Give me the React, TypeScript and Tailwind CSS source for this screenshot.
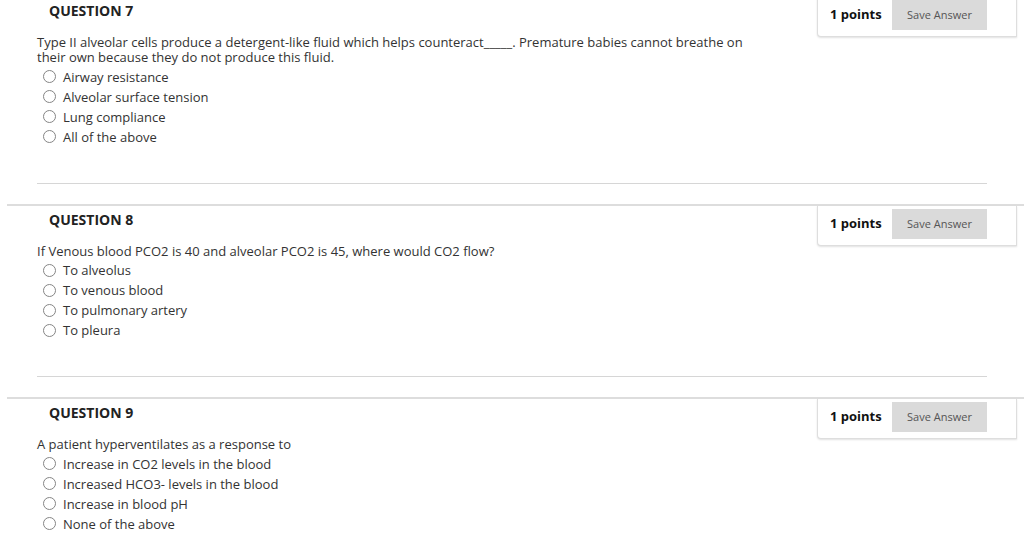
import React from "react";

type Q = { n: number; text: string; options: string[] };

const questions: Q[] = [
  {
    n: 7,
    text: "Type II alveolar cells produce a detergent-like fluid which helps counteract_____. Premature babies cannot breathe on their own because they do not produce this fluid.",
    options: ["Airway resistance", "Alveolar surface tension", "Lung compliance", "All of the above"],
  },
  {
    n: 8,
    text: "If Venous blood PCO2 is 40 and alveolar PCO2 is 45, where would CO2 flow?",
    options: ["To alveolus", "To venous blood", "To pulmonary artery", "To pleura"],
  },
  {
    n: 9,
    text: "A patient hyperventilates as a response to",
    options: [
      "Increase in CO2 levels in the blood",
      "Increased HCO3- levels in the blood",
      "Increase in blood pH",
      "None of the above",
    ],
  },
];

function Question({ q }: { q: Q }) {
  return (
    <div className="border-t-2 border-[#dddddd] w-[1017px]">
      <div className="flex justify-between items-start">
        <h3 className="pl-[42px] pt-[5px] text-[14px] font-bold leading-[18px] text-[#222222]">
          QUESTION {q.n}
        </h3>
        <div className="mr-[7px] w-[200px] h-[40px] border border-t-0 border-[#dedede] rounded-bl-[4px] shadow-[0_1px_2px_rgba(0,0,0,0.12)] flex items-start justify-between pt-[3px] pl-[12px] pr-[29px] bg-white">
          <span className="text-[13px] font-bold leading-[28px] text-[#111111]">1 points</span>
          <button className="w-[95px] h-[30px] bg-[#dadada] text-[11px] text-[#555555] leading-[30px]">
            Save Answer
          </button>
        </div>
      </div>
      <div className="pl-[30px] -mt-[2px]">
        <p className="w-[728px] text-[13px] leading-[15px] text-[#333333]">{q.text}</p>
        <ul className="mt-[1.5px]">
          {q.options.map((o) => (
            <li key={o} className="h-[20px] flex items-center">
              <span className="ml-[6px] w-[13px] h-[13px] rounded-full border border-[#858585] bg-white shrink-0" />
              <span className="ml-[7px] text-[13px] leading-[20px] text-[#333333]">{o}</span>
            </li>
          ))}
        </ul>
      </div>
      <div className="ml-[30px] w-[950px] h-px bg-[#d6d6d6] mt-[36px] mb-[20px]" />
    </div>
  );
}

export default function App() {
  return (
    <div
      className="w-[1024px] h-[546px] overflow-hidden bg-white pl-[7px]"
      style={{ fontFamily: '"Open Sans", "Noto Sans", sans-serif' }}
    >
      <div className="-mt-[5px]">
        {questions.map((q) => (
          <Question key={q.n} q={q} />
        ))}
      </div>
    </div>
  );
}
